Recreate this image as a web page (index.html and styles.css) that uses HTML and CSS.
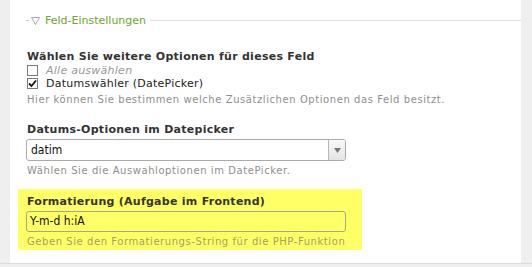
FILE: index.html
```html
<!DOCTYPE html>
<html lang="de">
<head>
<meta charset="utf-8">
<link rel="stylesheet" href="styles.css">
</head>
<body>
<div class="page">
  <div class="panel">
    <div class="legend">
      <span class="legend-dash"></span>
      <svg class="legend-tri" width="9" height="8" viewBox="0 0 9 8"><path d="M0.5 0.5 H8.5 L4.5 7.5 Z" fill="none" stroke="#a8a8a8" stroke-width="1"/></svg>
      <span class="legend-text">Feld-Einstellungen</span>
      <span class="legend-line"></span>
    </div>

    <div class="group g1">
      <div class="label">Wählen Sie weitere Optionen für dieses Feld</div>
      <div class="check-row">
        <span class="box"></span>
        <span class="check-label muted">Alle auswählen</span>
      </div>
      <div class="check-row">
        <span class="box"><svg width="9" height="9" viewBox="0 0 9 9"><path d="M1 4.5 L3.5 7 L8 1.5" fill="none" stroke="#111" stroke-width="1.8"/></svg></span>
        <span class="check-label">Datumswähler (DatePicker)</span>
      </div>
      <div class="help">Hier können Sie bestimmen welche Zusätzlichen Optionen das Feld besitzt.</div>
    </div>

    <div class="group g2">
      <div class="label">Datums-Optionen im Datepicker</div>
      <div class="select">
        <span class="select-value">datim</span>
        <span class="select-btn"><svg width="7" height="5" viewBox="0 0 7 5"><path d="M0 0 H7 L3.5 5 Z" fill="#777"/></svg></span>
      </div>
      <div class="help">Wählen Sie die Auswahloptionen im DatePicker.</div>
    </div>

    <div class="group g3">
      <div class="label">Formatierung (Aufgabe im Frontend)</div>
      <div class="input">Y-m-d h:iA</div>
      <div class="help hl">Geben Sie den Formatierungs-String für die PHP-Funktion</div>
    </div>
  </div>
  <div class="right"></div>
</div>
<div class="bottom"></div>
</body>
</html>
```

FILE: styles.css
```css
html, body {
  margin: 0;
  padding: 0;
  background: #efefef;
}
body {
  font-family: "DejaVu Sans", Verdana, sans-serif;
  color: #333;
  width: 532px;
  height: 267px;
  overflow: hidden;
}
.page {
  display: flex;
  height: 263px;
  padding-left: 10px;
}
.panel {
  width: 511px;
  background: #fff;
  padding-left: 16px;
  box-sizing: border-box;
  padding-top: 14px;
}
.right {
  flex: 1;
}
.bottom {
  height: 4px;
  border-top: 1px solid #dcdcdc;
  background: #efefef;
  box-sizing: border-box;
}
.legend {
  display: flex;
  align-items: center;
  height: 13px;
}
.legend-dash {
  width: 3px;
  height: 1px;
  background: #cfcfcf;
  margin-right: 2px;
}
.legend-tri {
  margin-right: 5px;
}
.legend-text {
  font-size: 11px;
  color: #6ea52d;
  white-space: nowrap;
}
.legend-line {
  flex: 1;
  height: 1px;
  background: #dedede;
  margin-left: 4px;
}
.label {
  font-size: 11px;
  font-weight: bold;
  line-height: 14px;
  color: #333;
  white-space: nowrap;
  padding-left: 1px;
  letter-spacing: 0.27px;
}
.g1 {
  margin-top: 23px;
}
.check-row {
  display: flex;
  align-items: center;
  height: 13px;
  padding-left: 1px;
}
.box {
  width: 11px;
  height: 11px;
  border: 1px solid #7a7a7a;
  box-sizing: border-box;
  background: #fff;
  display: flex;
  align-items: center;
  justify-content: center;
  margin-right: 8px;
}
.check-label {
  font-size: 11px;
  color: #222;
  white-space: nowrap;
  letter-spacing: 0.25px;
}
.check-label.muted {
  color: #999;
  font-style: italic;
}
.help {
  font-size: 10px;
  line-height: 14px;
  color: #8e8e8e;
  white-space: nowrap;
  margin-top: 3px;
  padding-left: 1px;
  letter-spacing: 0.57px;
}
.g2 {
  margin-top: 16px;
}
.select {
  width: 320px;
  height: 22px;
  margin-top: 2px;
  border: 1px solid #aaa;
  border-radius: 3px;
  box-sizing: border-box;
  display: flex;
  align-items: stretch;
}
.select-value, .input {
  font-family: "DejaVu Sans Condensed", "DejaVu Sans", sans-serif;
  font-size: 12px;
  color: #111;
}
.select-value {
  flex: 1;
  padding-left: 4px;
  line-height: 20px;
}
.select-btn {
  width: 16px;
  border-left: 1px solid #b5b5b5;
  background: linear-gradient(#fafafa, #e2e2e2);
  border-radius: 0 2px 2px 0;
  display: flex;
  align-items: center;
  justify-content: center;
}
.g3 {
  margin-top: 11px;
  margin-left: -8px;
  width: 344px;
  background: #ffff66;
  padding: 6px 16px 1px 8px;
  box-sizing: border-box;
}
.input {
  width: 320px;
  height: 21px;
  margin-top: 2px;
  border: 1px solid #a6a688;
  border-radius: 3px;
  box-sizing: border-box;
  padding-left: 3px;
  line-height: 19px;
}
.help.hl {
  color: #a3a168;
}
```
